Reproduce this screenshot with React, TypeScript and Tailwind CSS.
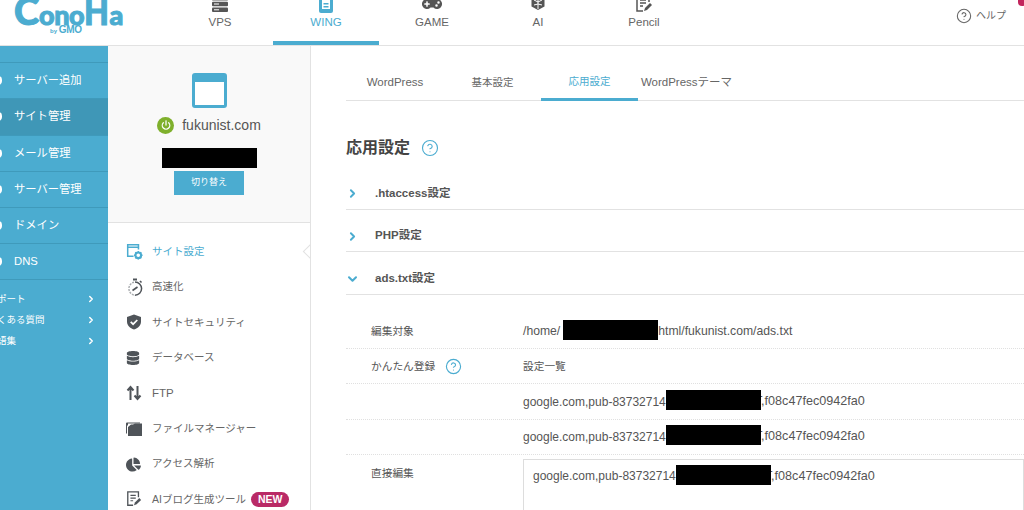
import { ChevronDown, ChevronRight, CircleHelp, Power } from "lucide-react";
import { FaChartPie, FaDatabase, FaGamepad } from "react-icons/fa";

const FONT = "font-['Liberation_Sans','Noto_Sans_CJK_JP',sans-serif]";

const SIDE_ITEMS = ["サーバー追加", "サイト管理", "メール管理", "サーバー管理", "ドメイン", "DNS"];
const SIDE_LINKS = ["サポート", "よくある質問", "用語集"];

function ServerIcon() {
  return (
    <svg viewBox="0 0 18 18" className="h-[18px] w-[18px] fill-[#555]">
      <rect x="1" y="1" width="16" height="4.5" rx="1" />
      <rect x="1" y="6.8" width="16" height="4.5" rx="1" />
      <rect x="1" y="12.6" width="16" height="4.5" rx="1" />
      <rect x="3" y="8.5" width="5" height="1" fill="#fff" />
      <rect x="3" y="14.3" width="5" height="1" fill="#fff" />
    </svg>
  );
}

function WingIcon() {
  return (
    <svg viewBox="0 0 18 18" className="h-[18px] w-[18px] fill-[#4bacd0]">
      <rect x="2" y="0" width="14" height="18" rx="2" />
      <rect x="5" y="4" width="8" height="10" fill="#fff" />
      <rect x="6.5" y="8" width="5" height="1.5" />
      <rect x="6.5" y="11" width="5" height="1.5" />
    </svg>
  );
}

function BrainIcon() {
  return (
    <svg viewBox="0 0 18 18" className="h-[18px] w-[18px]">
      <path d="M9 0l6.5 3.5v8L9 15l-6.5-3.5v-8z" fill="#555" />
      <path d="M9 1v13M5 5l4 2 4-2M5 10l4-1 4 1" stroke="#fff" strokeWidth="1" fill="none" />
    </svg>
  );
}

function PencilDocIcon({ className, color }: { className: string; color: string }) {
  return (
    <svg viewBox="0 0 18 18" className={className} fill="none">
      <path d="M14 7V1H2v15h6" stroke={color} strokeWidth="1.5" />
      <path d="M5 5h6M5 8h6M5 11h3" stroke={color} strokeWidth="1.3" />
      <path d="M9 16l1-3 5-5 2 2-5 5z" fill={color} />
    </svg>
  );
}

function SiteSettingIcon() {
  return (
    <svg viewBox="0 0 18 18" className="h-[17px] w-[17px]" fill="none">
      <path d="M8 14H1.8V1.8h11.4V7" stroke="#4bacd0" strokeWidth="1.6" />
      <path d="M2 4.5h11" stroke="#4bacd0" strokeWidth="1.6" />
      <circle cx="13" cy="13" r="3" stroke="#4bacd0" strokeWidth="2.2" />
      <path d="M13 8.5v1.5M13 16v1.5M8.5 13H10M16 13h1.5M9.8 9.8l1 1M15.2 15.2l1 1M16.2 9.8l-1 1M10.8 15.2l-1 1" stroke="#4bacd0" strokeWidth="1.4" />
    </svg>
  );
}

function StopwatchIcon() {
  return (
    <svg viewBox="0 0 18 18" className="h-[18px] w-[18px]" fill="none">
      <path d="M8 4.2A6.6 6.6 0 009 17.2" stroke="#a8abae" strokeWidth="1.4" strokeDasharray="2 1" />
      <path d="M9 4a6.6 6.6 0 010 13.2" stroke="#4f5459" strokeWidth="1.5" />
      <path d="M7 1.5h4" stroke="#4f5459" strokeWidth="2" />
      <path d="M14 3l1.5 1.5" stroke="#4f5459" strokeWidth="1.6" />
      <path d="M6.5 12.5L11.5 9" stroke="#4f5459" strokeWidth="1.6" />
    </svg>
  );
}

function ShieldCheckIcon() {
  return (
    <svg viewBox="0 0 16 16" className="h-[16px] w-[16px]">
      <path d="M8 .5l7 2.5v4.5c0 3.8-3 6.8-7 8-4-1.2-7-4.2-7-8V3z" fill="#4f5459" />
      <path d="M4.7 7.8l2.4 2.4 4.2-4.2" stroke="#fff" strokeWidth="1.7" fill="none" />
    </svg>
  );
}

function FtpIcon() {
  return (
    <svg viewBox="0 0 16 16" className="h-[16px] w-[16px]" fill="none" stroke="#4f5459" strokeWidth="2">
      <path d="M4.5 15V3M1.5 5.5l3-3.5 3 3.5" />
      <path d="M11.5 1v12M8.5 10.5l3 3.5 3-3.5" />
    </svg>
  );
}

function FolderIcon() {
  return (
    <svg viewBox="0 0 16 14" className="h-[14px] w-[16px] fill-[#4f5459]">
      <path d="M0 1.5A1 1 0 011 .5h13v1H2v2H1v8H0z" />
      <path d="M2 5l3-2.5h2L9 1.5h7V14H2z" />
    </svg>
  );
}

function Redacted({ className }: { className: string }) {
  return <span className={`relative z-10 inline-block h-[20px] w-[95px] bg-black ${className}`} />;
}

function AdsLine() {
  return (
    <span className="flex items-center whitespace-nowrap text-[12px]">
      google.com,pub-83732714
      <Redacted className="mt-[-3px]" />
      <span className="ml-[-6px] text-[12.6px]">T,f08c47fec0942fa0</span>
    </span>
  );
}

function Header() {
  const items = [
    { label: "VPS", icon: <ServerIcon /> },
    { label: "WING", icon: <WingIcon />, active: true },
    { label: "GAME", icon: <FaGamepad className="h-[20px] w-[20px] text-[#555]" /> },
    { label: "AI", icon: <BrainIcon /> },
    { label: "Pencil", icon: <PencilDocIcon className="h-[18px] w-[18px]" color="#555" /> },
  ];
  return (
    <header className="relative flex h-[46px] shrink-0 border-b border-[#e2e2e2] bg-white">
      <div className="relative w-[167px] shrink-0 overflow-hidden">
        <div className="mt-[-9px] flex items-baseline pl-[14px] font-['Lato',sans-serif] font-black leading-[38px] text-[#4bacd0] [-webkit-text-stroke:1px_#4bacd0]">
          <span className="text-[38px]">C</span>
          <span className="text-[27px] tracking-[-0.5px]">ono</span>
          <span className="origin-left scale-x-[0.85] text-[38px]">H</span>
          <span className="ml-[-4px] text-[27px]">a</span>
        </div>
        <span className="absolute left-[50px] top-[26px] whitespace-nowrap text-[6px] font-bold leading-[8px] text-[#4bacd0]">
          by <span className="text-[10px] tracking-[-0.3px]">GMO</span>
        </span>
      </div>
      {items.map((item) => (
        <div
          key={item.label}
          className={`flex h-[45px] w-[106px] flex-col items-center border-b-4 text-[11.5px] ${
            item.active ? "border-[#4bacd0] text-[#4bacd0]" : "border-transparent text-[#666]"
          }`}
        >
          <div className="mt-[-6px] flex h-[20px] items-center">{item.icon}</div>
          <span className="mt-[1px] leading-[14px]">{item.label}</span>
        </div>
      ))}
      <div className="ml-auto mr-[18px] flex h-[31px] items-center gap-[4px] text-[10px] text-[#666]">
        <CircleHelp className="h-[16px] w-[16px]" strokeWidth={1.6} />
        ヘルプ
      </div>
      <div className="absolute right-[-2px] top-[-6px] h-[12px] w-[8px] rounded-full bg-[#c2255c]" />
    </header>
  );
}

function Sidebar() {
  return (
    <aside className="w-[108px] shrink-0 overflow-hidden bg-[#4bacd0] pt-[16px] text-white">
      {SIDE_ITEMS.map((label, i) => (
        <div
          key={label}
          className={`relative flex h-[36.3px] items-center border-t border-[#3f9abb] pl-[14px] text-[11.3px] ${
            label === "サイト管理" ? "bg-[#3f97b7]" : ""
          } ${i === SIDE_ITEMS.length - 1 ? "border-b" : ""}`}
        >
          <span className="absolute left-[-6px] h-[9px] w-[8px] rounded-sm bg-white" />
          {label}
        </div>
      ))}
      <div className="ml-[-12.5px] mt-[9px] flex flex-col text-[9.5px]">
        {SIDE_LINKS.map((label) => (
          <div key={label} className="flex h-[21px] items-center justify-between pr-[12px]">
            {label}
            <ChevronRight className="h-[10px] w-[10px]" strokeWidth={3.5} />
          </div>
        ))}
      </div>
    </aside>
  );
}

function SiteMenu() {
  const items = [
    { label: "サイト設定", icon: <SiteSettingIcon />, active: true },
    { label: "高速化", icon: <StopwatchIcon /> },
    { label: "サイトセキュリティ", icon: <ShieldCheckIcon /> },
    { label: "データベース", icon: <FaDatabase className="h-[14px] w-[14px]" /> },
    { label: "FTP", icon: <FtpIcon /> },
    { label: "ファイルマネージャー", icon: <FolderIcon /> },
    { label: "アクセス解析", icon: <FaChartPie className="h-[15px] w-[15px]" /> },
    { label: "AIブログ生成ツール", icon: <PencilDocIcon className="h-[16px] w-[16px]" color="#4f5459" />, badge: true },
  ];
  return (
    <div className="pt-[11px]">
      {items.map((item) => (
        <div
          key={item.label}
          className={`relative flex h-[35.4px] items-center whitespace-nowrap pl-[18px] text-[10.5px] ${
            item.active ? "text-[#4bacd0]" : "text-[#666]"
          }`}
        >
          <span className="flex w-[26px] items-center text-[#4f5459]">{item.icon}</span>
          {item.label === "FTP" ? <span className="text-[11.5px]">FTP</span> : item.label}
          {item.badge && (
            <span className="ml-[5px] rounded-full bg-[#b92a66] px-[7px] text-[10.5px] font-bold leading-[15px] text-white">
              NEW
            </span>
          )}
          {item.active && (
            <span className="absolute right-[-6px] h-[11px] w-[11px] rotate-45 border-b border-l border-[#e2e2e2] bg-white" />
          )}
        </div>
      ))}
    </div>
  );
}

function SitePanel() {
  return (
    <section className="w-[203px] shrink-0 overflow-hidden border-r border-[#e2e2e2] bg-white">
      <div className="flex h-[177px] flex-col items-center border-b border-[#e2e2e2] bg-[#f9f9f9] pt-[27px]">
        <div className="h-[35px] w-[35px] rounded-[3px] border-[3px] border-t-[9px] border-[#4bacd0] bg-white" />
        <div className="mt-[8px] flex h-[18px] items-center gap-[8px] text-[14px] text-[#555]">
          <span className="flex h-[17px] w-[17px] items-center justify-center rounded-full bg-[#7fb02c]">
            <Power className="h-[10px] w-[10px] text-white" strokeWidth={3} />
          </span>
          fukunist.com
        </div>
        <div className="mt-[14px] h-[20px] w-[95px] bg-black" />
        <div className="mt-[3px] flex h-[24px] w-[70px] items-center justify-center bg-[#4bacd0] text-[9px] text-white">
          切り替え
        </div>
      </div>
      <SiteMenu />
    </section>
  );
}

function Row({ label, help, children }: { label?: string; help?: boolean; children: React.ReactNode }) {
  return (
    <div className="flex h-[35.2px] items-center border-b border-dotted border-[#e0e0e0] pl-[25px] text-[10.7px] text-[#555]">
      <div className="flex w-[152px] shrink-0 items-center gap-[10px]">
        {label}
        {help && <CircleHelp className="h-[17px] w-[17px] text-[#4bacd0]" strokeWidth={1.6} />}
      </div>
      {children}
    </div>
  );
}

function Accordion({ label, open }: { label: string; open?: boolean }) {
  return (
    <div className="flex h-[42.7px] items-center border-b border-[#e2e2e2] pt-[11px] text-[11.5px] font-bold text-[#555]">
      <span className="flex w-[29px] items-center">
        {open ? (
          <ChevronDown className="ml-[-1px] h-[14px] w-[15px] text-[#4bacd0]" strokeWidth={3.5} />
        ) : (
          <ChevronRight className="h-[13px] w-[13px] text-[#4bacd0]" strokeWidth={3.5} />
        )}
      </span>
      {label}
    </div>
  );
}

function Main() {
  return (
    <main className="min-w-0 flex-1 overflow-hidden bg-white pl-[35px]">
      <nav className="mt-[18px] flex h-[37px] border-b border-[#e2e2e2] text-[#666]">
        <div className="flex h-[37px] w-[98px] items-center justify-center pt-[1px] text-[11.5px]">WordPress</div>
        <div className="flex h-[37px] w-[97px] items-center justify-center pt-[1px] text-[10.5px]">基本設定</div>
        <div className="flex h-[37px] w-[97px] items-center justify-center border-b-[3px] border-[#4bacd0] pt-[1px] text-[10.5px] text-[#4bacd0]">
          応用設定
        </div>
        <div className="flex h-[37px] w-[97px] items-center justify-center whitespace-nowrap pt-[1px] text-[11.5px]">
          WordPressテーマ
        </div>
      </nav>
      <div className="mt-[35px] flex h-[24px] items-center gap-[11px] text-[16px] font-bold text-[#444]">
        応用設定
        <CircleHelp className="h-[18px] w-[18px] text-[#4bacd0]" strokeWidth={1.5} />
      </div>
      <div className="mt-[7px]">
        <Accordion label=".htaccess設定" />
        <Accordion label="PHP設定" />
        <Accordion label="ads.txt設定" open />
      </div>
      <div className="mt-[19px]">
        <Row label="編集対象">
          <span className="flex items-center whitespace-nowrap text-[12.2px]">
            /home/
            <Redacted className="ml-[3px] mt-[-2px]" />
            html/fukunist.com/ads.txt
          </span>
        </Row>
        <Row label="かんたん登録" help>
          <span>設定一覧</span>
        </Row>
        <Row>
          <AdsLine />
        </Row>
        <Row>
          <AdsLine />
        </Row>
        <div className="flex pl-[25px] pt-[4px] text-[10.7px] text-[#555]">
          <div className="w-[152px] shrink-0 pt-[6px]">直接編集</div>
          <div className="h-[80px] flex-1 border border-[#ddd] pl-[9px] pt-[7px]">
            <AdsLine />
          </div>
        </div>
      </div>
    </main>
  );
}

export default function App() {
  return (
    <div className={`flex h-[510px] w-[1024px] flex-col overflow-hidden bg-white ${FONT}`}>
      <Header />
      <div className="flex min-h-0 flex-1">
        <Sidebar />
        <SitePanel />
        <Main />
      </div>
    </div>
  );
}
